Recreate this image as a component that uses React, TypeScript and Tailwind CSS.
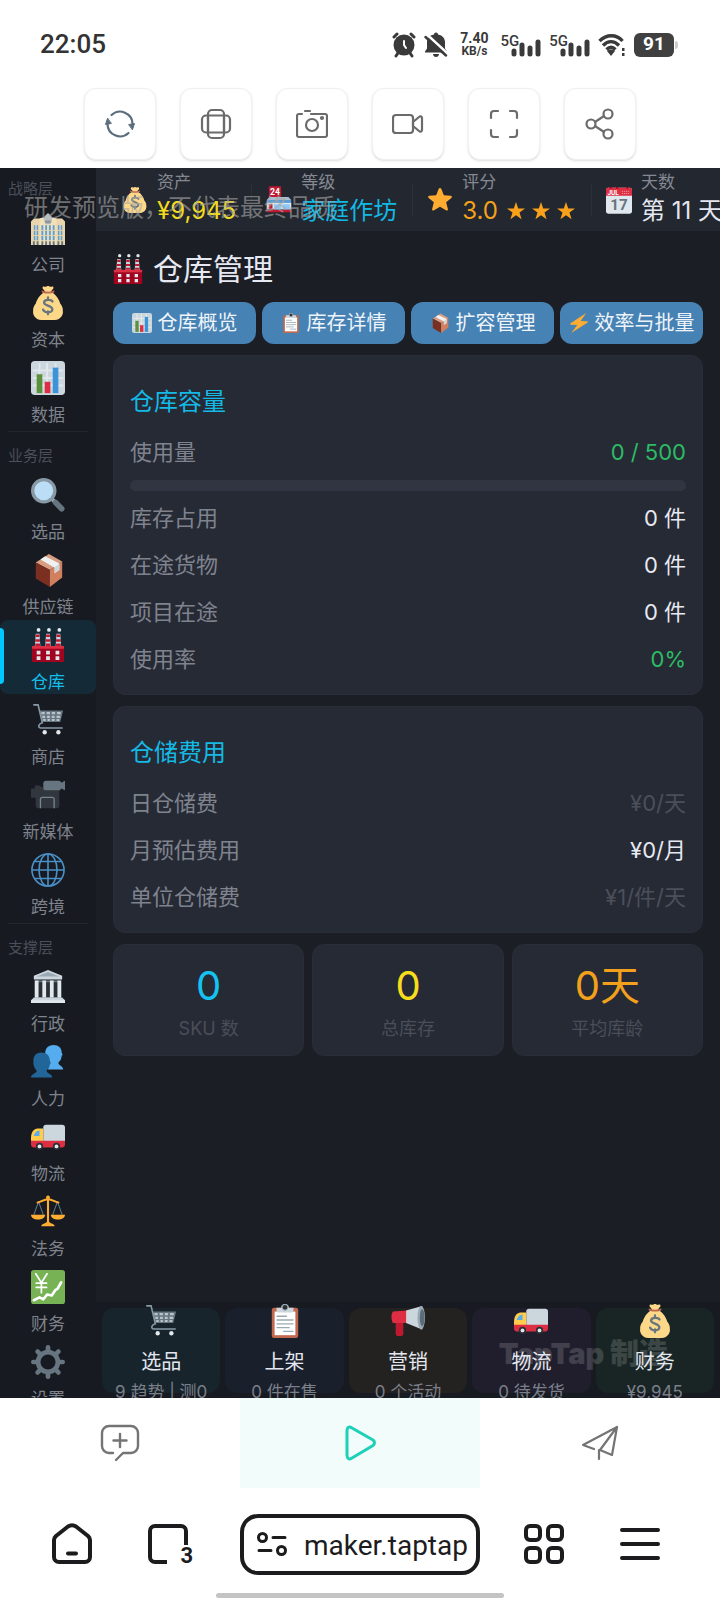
import type { ReactNode } from "react";

/* ---------- colour pictograms, all on a 36 x 36 grid ---------- */

const pictograms: Record<string, ReactNode> = {
  office: (
    <>
      <path fill="#e8d5ab" d="M0 11l3-3h8v28H0zM25 8h8l3 3v25H25z" />
      <path fill="#f1e0ba" d="M9 8l3-1h12l3 1v28H9z" />
      <path fill="#b9bec2" d="M14 6l2-2 2-2 2 2 2 2v5l-2 3h-4l-2-3z" />
      <path fill="#8f979d" d="M15 10h6v3h-6z" />
      <path fill="#5c9fd6" d="M3 15h1.600v16H3zM6 15h1.600v16H6zM11 15h2v16h-2zM15 15h2v16h-2zM19 15h2v16h-2zM23 15h2v16h-2zM28.500 15h1.600v16h-1.600zM31.500 15h1.600v16h-1.600z" />
      <path stroke="#e8d5ab" d="M0 20.500h36M0 26h36" />
      <path fill="#66757f" d="M2 32h2v4H2zM6 32h2v4H6zM11 32h2v4h-2zM15 32h2v4h-2zM19 32h2v4h-2zM23 32h2v4h-2zM28 32h2v4h-2zM32 32h2v4h-2z" />
    </>
  ),
  moneybag: (
    <>
      <path fill="#fdd888" d="M30.900 18.600C29.500 12.500 24.800 8 21 6l1.300-1.800c1-.7 2-1.700 1.200-3.300-1-1-2.200.3-3.400-.2C19.300.4 19 0 18 0s-1.300.4-2.100.7c-1.200.5-2.500-.8-3.400.2-.8 1.600.2 2.600 1.200 3.300L15 6c-3.800 2-8.500 6.500-9.900 12.600C3 21 2 24 2.300 26.400 1.500 29 4 36 11 36h14c7 0 9.500-7 8.700-9.600.3-2.400-.7-5.400-2.800-7.800z" />
      <path fill="#bf6952" d="M11.500 4.500C13 6.500 23 6.500 24.500 4.500l.3 2c-2 2-11.600 2-13.600 0z" />
      <path fill="none" stroke="#67757f" strokeWidth="2.400" strokeLinecap="round" d="M22.800 16.500c-1-2.200-8.500-3-9 .8-.4 3.800 8.800 3.200 8.800 7.400 0 4.300-8.500 4-9.800.3M18 12v2.500M18 27v3" />
    </>
  ),
  chart: (
    <>
      <rect width="36" height="36" rx="4" fill="#ccd6dd" />
      <path stroke="#e1e8ed" strokeWidth="2" d="M2 10h32M2 18h32M2 26h32M9 2v32M17 2v32M26 2v32" />
      <path fill="#5c913b" d="M6 14h6v20H6z" />
      <path fill="#dd2e44" d="M14.500 22h6v12h-6z" />
      <path fill="#3b94d9" d="M23 7h6v27h-6z" />
    </>
  ),
  magnifier: (
    <>
      <path stroke="#9aaab4" strokeWidth="4" d="M21 21l5 5" />
      <path stroke="#66757f" strokeWidth="6" strokeLinecap="round" d="M26 26l6.500 6.500" />
      <circle cx="13.500" cy="13.500" r="13.500" fill="#8899a6" />
      <circle cx="13.500" cy="13.500" r="10" fill="#bbddf5" />
    </>
  ),
  parcel: (
    <>
      <path fill="#d99e82" d="M19 1L33 9 20 18 5 10z" />
      <path fill="#7a2f20" d="M5 10l15 8v18L5 27z" />
      <path fill="#d0805f" d="M33 9v17L20 36V18z" />
      <path fill="#f0f1f2" d="M10 7l15 8.500v6l5-3.500v-7L15 3.500z" />
      <path fill="#ccd6dd" d="M25 15l5-4v7l-5 3.500z" />
    </>
  ),
  factory: (
    <>
      <path fill="#ccd6dd" d="M5 6h4l1 14H4zM16 6h4l1 14h-6zM27 6h4l1 14h-6z" />
      <path fill="#be1931" d="M5 7h4v2.500H5zM4.500 12h5v2.500h-5zM4.500 16.500h5V19h-5zM16 7h4v2.500h-4zM15.500 12h5v2.500h-5zM15.500 16.500h5V19h-5zM27 7h4v2.500h-4zM26.500 12h5v2.500h-5zM26.500 16.500h5V19h-5z" />
      <circle cx="8" cy="2" r="2" fill="#e1e8ed" />
      <circle cx="19" cy="2" r="2" fill="#e1e8ed" />
      <circle cx="30" cy="2" r="2" fill="#e1e8ed" />
      <path fill="#a0041e" d="M1 20h34v16H1z" />
      <path fill="#dd2e44" d="M1 19h34v3H1z" />
      <path fill="#e1e8ed" d="M6 24h4v4H6zM16 24h4v4h-4zM26 24h4v4h-4zM6 30h4v4H6zM16 30h4v4h-4zM26 30h4v4h-4z" />
    </>
  ),
  cart: (
    <>
      <path fill="#66757f" d="M9 8h25l-3 12H12z" />
      <path fill="#b8c4cc" d="M11 9.500h3.500V12H11zM16.500 9.500H20V12h-3.500zM22 9.500h3.500V12H22zM27.500 9.500h4V12h-4zM12 13.500h3V16h-3zM17 13.500h3V16h-3zM22 13.500h3V16h-3zM27 13.500h4V16h-4zM13 17h2.500v2H13zM17.500 17H20v2h-2.500zM22 17h3v2h-3zM27 17h3v2h-3z" />
      <path fill="none" stroke="#8899a6" strokeWidth="1.700" strokeLinecap="round" d="M3 2h4.500l4.500 19c-4 1-5 5-2 5.500h23" />
      <circle cx="14.500" cy="31" r="2.300" fill="#e1e8ed" />
      <circle cx="29" cy="31" r="2.300" fill="#e1e8ed" />
    </>
  ),
  camera: (
    <>
      <path fill="#31373d" d="M0 11h4V8h5l3 2h18v19a3 3 0 01-3 3H8a3 3 0 01-3-3v-8H0z" />
      <path fill="none" stroke="#77858f" strokeWidth="1.400" d="M10 32V22.500c0-1.500 1-2 2-2h11c1 0 1.500.5 1.500 2V32" />
      <rect x="13" y="3" width="19" height="10" rx="3" fill="#66757f" />
      <path fill="#66757f" d="M30 6l6-3v10l-6-3z" />
    </>
  ),
  globe: (
    <g fill="none" stroke="#4a90c8" strokeWidth="1.700">
      <circle cx="18" cy="18" r="17" />
      <ellipse cx="18" cy="18" rx="9.500" ry="17" />
      <path d="M18 1v34M1 18h34M4 9h28M4 27h28" />
    </g>
  ),
  institution: (
    <>
      <path fill="#66757f" d="M4 11h28v19H4z" />
      <path fill="#292f33" d="M7 13h22v16H7z" />
      <path fill="#ccd6dd" d="M18 0l15 6v4H3V6zM3 29h30l3 3v3H0v-3z" />
      <path fill="#99aab5" d="M18 2l12 5H6z" />
      <path fill="#e1e8ed" d="M4 11h4v18H4zM12 11h4v18h-4zM20 11h4v18h-4zM28 11h4v18h-4zM0 32h36v3H0z" />
    </>
  ),
  people: (
    <>
      <path fill="#55acee" d="M15 9c0-6 4-9 9-9s8.500 3 8.500 8l1 2.500-1 1c-.3 4-1.700 5.500-3.500 7 0 4 5 3 5 7.500H18z" />
      <path fill="#226699" d="M2.500 17C2.500 11 6 8 11 8s9 3 9 9l1 2-1 1.500c-.5 4-1.500 5-3.500 6.500 0 4 6 3 6 7.500H0C0 30 6 31 6 27c-2.500-2-3.500-5-3.500-10z" />
    </>
  ),
  truck: (
    <>
      <rect x="13" y="5" width="23" height="20" rx="3" fill="#ccd6dd" />
      <path fill="#ffcc4d" d="M0 24v-5c0-6 3-10 7-10h6v15z" />
      <path fill="#55acee" d="M3 17c.5-3 3-6 6-6v6z" />
      <path fill="#dd2e44" d="M0 22h36v4c0 2-1 3-3 3H3c-2 0-3-1-3-3z" />
      <circle cx="9" cy="28" r="3.800" fill="#292f33" />
      <circle cx="27" cy="28" r="3.800" fill="#292f33" />
      <circle cx="9" cy="28" r="2" fill="#e1e8ed" />
      <circle cx="27" cy="28" r="2" fill="#e1e8ed" />
    </>
  ),
  scales: (
    <>
      <path fill="none" stroke="#66859c" strokeWidth="1" d="M8 7L3 21M8 7l5 14M28 7l-5 14M28 7l5 14" />
      <path fill="none" stroke="#ffac33" strokeWidth="2.200" strokeLinecap="round" d="M7 8c3-.500 7-3.500 11-3.500S26 7.500 29 8M18 2v28" />
      <path fill="#ffac33" d="M0 21h15c0 3-3 5-7.500 5S0 24 0 21zM21 21h15c0 3-3 5-7.500 5S21 24 21 21zM11 33c0-3 4-2 6-5h2c2 3 6 2 6 5z" />
      <circle cx="18" cy="2.500" r="2" fill="#ffac33" />
    </>
  ),
  yenChart: (
    <>
      <rect width="36" height="36" rx="3" fill="#77b255" />
      <path fill="none" stroke="#fff" strokeWidth="1.800" strokeLinecap="round" d="M5 4l6 9.500L17 4M11 13.500V24M5.500 14h11M5.500 18.500h11" />
      <path fill="none" stroke="#fff" strokeWidth="2.800" strokeLinecap="round" strokeLinejoin="round" d="M3 32l6-3 4 2 4-5 5 1 4-6 2-1 4-7" />
    </>
  ),
  gear: (
    <>
      <circle cx="18" cy="18" r="10.500" fill="none" stroke="#66757f" strokeWidth="5" />
      <path stroke="#66757f" strokeWidth="5" strokeLinecap="round" d="M18 2.500V7M18 29v4.500M2.500 18H7M29 18h4.500M7 7l3 3M26 26l3 3M29 7l-3 3M7 29l3-3" />
    </>
  ),
  clipboard: (
    <>
      <rect x="4" y="4" width="28" height="32" rx="2.500" fill="#c1694f" />
      <path fill="#fff" d="M7 8h22v25H7z" />
      <path stroke="#99aab5" strokeWidth="1.500" d="M9 13h11M9 17h18M9 21h18M9 25h14M16 29h11" />
      <path fill="#ccd6dd" d="M9 4h5a4 4 0 018 0h5v3c0 1-1 2-2 2H11c-1 0-2-1-2-2z" />
      <circle cx="18" cy="3.500" r="3" fill="#292f33" stroke="#99aab5" />
    </>
  ),
  bolt: (
    <path fill="#ffac33" d="M31 0L3 18.500c-1.500 1-1 2.500.5 2.500L15 21.500 4 36l29-18.500c1.500-1 1-2.500-.5-2.500L21 14.500z" />
  ),
  star: (
    <path fill="#ffac33" d="M18 1.500c.8 0 1.500.5 1.900 1.400l3.400 8.600 9.400.6c1.700.1 2.300 2 1 3.100l-7.200 6 2.400 9.100c.4 1.600-1.200 2.800-2.600 1.900L18 27.200l-8.300 5c-1.400.9-3-.3-2.600-1.900l2.400-9.100-7.200-6c-1.300-1.100-.7-3 1-3.100l9.400-.6 3.400-8.600c.4-.9 1.100-1.400 1.900-1.400z" />
  ),
  calendar: (
    <>
      <rect width="36" height="36" y="1" rx="3" fill="#e1e8ed" />
      <path fill="#dd2e44" d="M0 12V4c0-2 1-3 3-3h30c2 0 3 1 3 3v8z" />
      <path fill="#a0041e" d="M5 0h3v2H5zM14 0h3v2h-3zM28 0h3v2h-3z" />
      <text x="2" y="10.500" fontSize="9" fontWeight="700" fill="#fff" fontFamily="Roboto">JUL</text>
      <path stroke="#f4abb4" strokeWidth="1.200" strokeDasharray="1.500 1.200" d="M22 6h11M22 9h11" />
      <text x="18" y="31.500" fontSize="21" fontWeight="700" textAnchor="middle" fill="#66757f" fontFamily="Roboto">17</text>
    </>
  ),
  store: (
    <>
      <path fill="#be1931" d="M4-1h17v15H4z" />
      <text x="12.500" y="10.500" fontSize="12" fontWeight="700" textAnchor="middle" fill="#fff" fontFamily="Roboto">24</text>
      <path fill="#a9bdd0" d="M1 18l4-4h26l4 4z" />
      <path fill="#5c9bd1" d="M1 18h34v5H1z" />
      <path fill="#e1e8ed" d="M1 22h34v9H1z" />
      <path fill="#be1931" d="M1 31h34v4H1zM4 24h5v6H4z" />
      <path fill="#88c9f9" d="M11 24h10v7H11zM23 24h10v7H23z" />
    </>
  ),
  megaphone: (
    <>
      <path fill="#be1931" d="M5 15h8v16c0 2-1 3-2.500 3h-3C6 34 5 33 5 31z" />
      <path fill="#dd2e44" d="M2 8l15-1v13H2c-2-3-2-9 0-12z" />
      <path fill="#ccd6dd" d="M16 7L33 2v25L16 20z" />
      <ellipse cx="32" cy="14.500" rx="4" ry="12.500" fill="#99aab5" />
      <ellipse cx="33" cy="14.500" rx="2.500" ry="9" fill="#5b6c78" />
    </>
  ),
};

function Pic({ name, className }: { name: string; className: string }) {
  return (
    <svg viewBox="0 0 36 36" overflow="visible" aria-hidden="true" className={`shrink-0 ${className}`}>
      {pictograms[name]}
    </svg>
  );
}

function Line({ children, className }: { children: ReactNode; className: string }) {
  return (
    <svg viewBox="0 0 32 32" fill="none" stroke="currentColor" strokeWidth="2.200" strokeLinecap="round" strokeLinejoin="round" aria-hidden="true" className={className}>
      {children}
    </svg>
  );
}

/* ---------- phone status bar ---------- */

function Signal() {
  return (
    <div className="flex items-start">
      <span className="text-[15px] leading-4 font-medium">5G</span>
      <svg viewBox="0 0 30 24" aria-hidden="true" className="-ml-2 h-6 w-[30px]">
        <path stroke="currentColor" strokeWidth="5" strokeLinecap="round" d="M3 18v3M11 12v9M19 15v6M27 9v12" />
      </svg>
    </div>
  );
}

function StatusBar() {
  return (
    <div className="flex h-[88px] shrink-0 items-center justify-between pt-px pr-[42px] pl-10 font-[Roboto,sans-serif] text-[#3a3a3a]">
      <time className="text-[26px] font-medium text-[#333]">22:05</time>
      <div className="flex items-center gap-2">
        <svg viewBox="0 0 24 26" aria-hidden="true" className="h-[26px] w-6">
          <circle cx="12" cy="13" r="10.500" fill="currentColor" />
          <path stroke="currentColor" strokeWidth="3" strokeLinecap="round" d="M2 5l3-3M22 5l-3-3M6 21l-2 3M18 21l2 3" />
          <path fill="none" stroke="#fff" strokeWidth="2" strokeLinecap="round" d="M12 9v4l2 3" />
        </svg>
        <svg viewBox="0 0 24 26" aria-hidden="true" className="h-[26px] w-6">
          <path fill="currentColor" d="M10 2.500a2 2 0 014 0c5 1 7 4 7 8v6l2 3v1H1v-1l2-3v-6c0-4 2-7 7-8zM9 22h6c0 4-6 4-6 0z" />
          <path stroke="#fff" strokeWidth="2.400" d="M3 2.500l20 18.500" />
          <path stroke="currentColor" strokeWidth="2.400" strokeLinecap="round" d="M1.500 5L22 23.500" />
        </svg>
        <div className="ml-1 text-center text-[12px] leading-[13px] font-bold">
          <div className="text-[14px]">7.40</div>
          <div>KB/s</div>
        </div>
        <div className="ml-1"><Signal /></div>
        <Signal />
        <svg viewBox="0 0 28 24" fill="none" stroke="currentColor" strokeWidth="3.400" aria-hidden="true" className="h-6 w-7">
          <path d="M1.500 8c7-7 17-7 23 0M5 12.500c5-5 11-5 16 0" />
          <path d="M8.500 16.500c3-3 6-3 9 0" />
          <path fill="currentColor" stroke="none" d="M9 18c2-2 6-2 8 0l-4 5zM24 15h2.500v3H24zM24 20h2.500v3H24z" />
        </svg>
        <div className="flex items-center gap-px">
          <div className="flex h-6 w-10 items-center justify-center rounded-md bg-[#404040] text-[19px] font-bold text-white">91</div>
          <div className="h-2 w-[3px] rounded-r bg-[#ccc]" />
        </div>
      </div>
    </div>
  );
}

/* ---------- preview toolbar ---------- */

const tools = [
  {
    label: "刷新",
    art: (
      <g stroke="#5b6d7d">
        <path d="M7.500 7A12.500 12.500 0 0128.500 16M24.500 25A12.500 12.500 0 013.500 16" />
        <path fill="#5b6d7d" d="M25 16.500l5.500-1-2 6zM7 15.500l-5.500 1 2-6z" strokeWidth="1" />
      </g>
    ),
  },
  {
    label: "旋转屏幕",
    art: (
      <>
        <rect x="8" y="2" width="16" height="28" rx="4" />
        <rect x="2" y="7.500" width="28" height="17" rx="4" />
        <path d="M8 8v16M24 8v16" />
      </>
    ),
  },
  {
    label: "截图",
    art: (
      <>
        <path d="M6 6H3a2 2 0 00-2 2v19a2 2 0 002 2h26a2 2 0 002-2V8a2 2 0 00-2-2H15M9 3h5" />
        <circle cx="16" cy="17" r="6" />
        <circle cx="26" cy="10" r="1" fill="currentColor" />
      </>
    ),
  },
  {
    label: "录屏",
    art: (
      <>
        <rect x="1" y="7" width="20" height="18" rx="3" />
        <path d="M21 14l6-5c1-1 3-1 3 1v12c0 2-2 2-3 1l-6-5z" />
      </>
    ),
  },
  { label: "全屏", art: <path d="M3 10V6a3 3 0 013-3h4M22 3h4a3 3 0 013 3v4M29 22v4a3 3 0 01-3 3h-4M10 29H6a3 3 0 01-3-3v-4" /> },
  {
    label: "分享",
    art: (
      <>
        <circle cx="7" cy="16" r="4.500" />
        <circle cx="24" cy="6" r="4.500" />
        <circle cx="24" cy="26" r="4.500" />
        <path d="M11 14l9-6M11 18l9 6" />
      </>
    ),
  },
];

function Toolbar() {
  return (
    <div className="flex h-20 shrink-0 items-start justify-center gap-6">
      {tools.map((t) => (
        <button key={t.label} aria-label={t.label} className="flex h-[72px] w-[72px] items-center justify-center rounded-xl border border-[#f0f0f0] bg-white text-[#6b6b6b] shadow-sm">
          <Line className="h-8 w-8">{t.art}</Line>
        </button>
      ))}
    </div>
  );
}

/* ---------- game: sidebar ---------- */

const sections = [
  { title: "战略层", items: [["office", "公司"], ["moneybag", "资本"], ["chart", "数据"]] },
  { title: "业务层", items: [["magnifier", "选品"], ["parcel", "供应链"], ["factory", "仓库"], ["cart", "商店"], ["camera", "新媒体"], ["globe", "跨境"]] },
  { title: "支撑层", items: [["institution", "行政"], ["people", "人力"], ["truck", "物流"], ["scales", "法务"], ["yenChart", "财务"], ["gear", "设置"]] },
];

function Sidebar() {
  return (
    <nav className="flex w-24 shrink-0 flex-col overflow-hidden bg-[#171a20] pt-[9px]">
      {sections.map((s, i) => (
        <section key={s.title} className="shrink-0">
          {i > 0 && <hr className="mx-2 mt-[3px] mb-3 border-[#22262d]" />}
          <h2 className="mb-[2px] pl-2 text-[15px] leading-6 text-[#4a4f59]">{s.title}</h2>
          {s.items.map(([icon, label]) => {
            const active = label === "仓库";
            return (
              <button
                key={label}
                aria-current={active ? "page" : undefined}
                className={`relative mb-px flex h-[74px] w-full flex-col items-center gap-[9px] rounded-lg pt-2 text-[17px] leading-[22px] ${active ? "bg-[#142b37] text-[#14bfec]" : "text-[#7f838d]"}`}
              >
                {active && <span className="absolute top-2 left-0 h-14 w-1 rounded-r bg-[#00c8ff]" />}
                <Pic name={icon} className="h-[34px] w-[34px]" />
                {label}
              </button>
            );
          })}
        </section>
      ))}
    </nav>
  );
}

/* ---------- game: header ---------- */

const stats = [
  { icon: "moneybag", label: "资产", value: "¥9,945", tone: "text-[#f2dc1c]" },
  { icon: "store", label: "等级", value: "家庭作坊", tone: "text-[#12b9e4]" },
  { icon: "star", label: "评分", value: "3.0", tone: "text-[#f5a21b]" },
  { icon: "calendar", label: "天数", value: "第 11 天", tone: "text-[#e4e7f0]" },
];

function Header() {
  return (
    <header className="flex h-[63px] shrink-0 items-center gap-[15px] overflow-hidden bg-[#23272f] pl-[26px] whitespace-nowrap">
      {stats.map((s, i) => (
        <div key={s.label} className="flex shrink-0 items-center gap-[14px]">
          {i > 0 && <span className="h-8 w-px bg-[#2b2f37]" />}
          <div className="flex items-center gap-[9px]">
            <Pic name={s.icon} className="h-[26px] w-[26px]" />
            <div className="pb-[3px]">
              <div className="text-[17px] leading-5 text-[#858993]">{s.label}</div>
              <div className={`mt-[5px] flex items-center gap-2 text-[24px] leading-7 ${s.tone}`}>
                {s.value}
                {s.icon === "star" && (
                  <span className="flex gap-[5px]">
                    {[0, 1, 2].map((n) => (
                      <svg key={n} viewBox="0 0 20 20" className="h-5 w-5" fill="#f9a11b" aria-hidden="true">
                        <path d="M10 1l2.200 6.600H19l-5.500 4 2.100 6.700L10 14.200l-5.600 4.100 2.100-6.700-5.500-4h6.800z" />
                      </svg>
                    ))}
                  </span>
                )}
              </div>
            </div>
          </div>
        </div>
      ))}
    </header>
  );
}

/* ---------- game: warehouse page ---------- */

const tabs = [["chart", "仓库概览"], ["clipboard", "库存详情"], ["parcel", "扩容管理"], ["bolt", "效率与批量"]];

function Row({ label, value, tone = "text-[#e6e9f2]" }: { label: string; value: string; tone?: string }) {
  return (
    <div className="flex h-[47px] items-center justify-between text-[22px]">
      <dt className="text-[#7f838e]">{label}</dt>
      <dd className={tone}>{value}</dd>
    </div>
  );
}

function Card({ title, children }: { title: string; children: ReactNode }) {
  return (
    <section className="mb-[11px] rounded-xl border border-[#292d38] bg-[#262a35] px-4 pt-7 pb-[11px]">
      <h2 className="mb-[9px] text-[24px] leading-9 text-[#14b9e6]">{title}</h2>
      <dl>{children}</dl>
    </section>
  );
}

const totals = [
  { value: "0", label: "SKU 数", tone: "text-[#14c3f2]" },
  { value: "0", label: "总库存", tone: "text-[#f7dd1c]" },
  { value: "0天", label: "平均库龄", tone: "text-[#f3a01c]" },
];

function Warehouse() {
  return (
    <main className="min-h-0 flex-1 overflow-hidden px-[17px]">
      <h1 className="flex h-[71px] items-center gap-[10px] pt-[5px] text-[30px] text-[#e6e9f2]">
        <Pic name="factory" className="h-[30px] w-[30px]" />
        仓库管理
      </h1>
      <div role="tablist" className="mb-[11px] grid grid-cols-4 gap-[6px]">
        {tabs.map(([icon, label]) => (
          <button key={label} role="tab" className="flex h-[42px] items-center justify-center gap-[6px] rounded-xl bg-[#4682b4] text-[20px] whitespace-nowrap text-[#eef4fa]">
            <Pic name={icon} className="h-5 w-5" />
            {label}
          </button>
        ))}
      </div>
      <Card title="仓库容量">
        <Row label="使用量" value="0 / 500" tone="text-[#2bbd63]" />
        <div role="progressbar" aria-label="使用量" aria-valuenow={0} aria-valuemax={500} className="my-1 h-[11px] rounded-full bg-[#313542]" />
        <Row label="库存占用" value="0 件" />
        <Row label="在途货物" value="0 件" />
        <Row label="项目在途" value="0 件" />
        <Row label="使用率" value="0%" tone="text-[#2bbd63]" />
      </Card>
      <Card title="仓储费用">
        <Row label="日仓储费" value="¥0/天" tone="text-[#4b4f5a]" />
        <Row label="月预估费用" value="¥0/月" />
        <Row label="单位仓储费" value="¥1/件/天" tone="text-[#4b4f5a]" />
      </Card>
      <div className="grid grid-cols-3 gap-2">
        {totals.map((t) => (
          <div key={t.label} className="flex h-[112px] flex-col items-center rounded-xl border border-[#292d38] bg-[#262a35] pt-[17px]">
            <strong className={`text-[40px] leading-[48px] font-normal ${t.tone}`}>{t.value}</strong>
            <span className="mt-[7px] text-[18px] leading-6 text-[#4a4e59]">{t.label}</span>
          </div>
        ))}
      </div>
    </main>
  );
}

/* ---------- game: shortcuts ---------- */

const shortcuts = [
  { icon: "cart", label: "选品", note: "9 趋势 | 测0", tone: "bg-[#17242c]" },
  { icon: "clipboard", label: "上架", note: "0 件在售", tone: "bg-[#191f2b]" },
  { icon: "megaphone", label: "营销", note: "0 个活动", tone: "bg-[#232220]" },
  { icon: "truck", label: "物流", note: "0 待发货", tone: "bg-[#201e2d]" },
  { icon: "moneybag", label: "财务", note: "¥9,945", tone: "bg-[#182524]" },
];

function Shortcuts() {
  return (
    <nav className="relative grid h-24 shrink-0 grid-cols-5 gap-[5px] overflow-hidden bg-[#171a21] px-[6px] pt-[6px]">
      <div aria-hidden="true" className="absolute right-[52px] bottom-[26px] z-10 text-[29px] leading-9 font-black text-white opacity-15">TapTap 制造</div>
      {shortcuts.map((s) => (
        <button key={s.label} className={`flex h-[85px] flex-col items-center justify-center rounded-xl pt-2 ${s.tone}`}>
          <Pic name={s.icon} className="h-[34px] w-[34px]" />
          <span className="relative z-20 mt-[10px] text-[20px] leading-7 text-[#e4e7f0]">{s.label}</span>
          <span className="mt-[2px] text-[17px] leading-7 whitespace-nowrap text-[#7b7f89]">{s.note}</span>
        </button>
      ))}
    </nav>
  );
}

/* ---------- bottom bars ---------- */

function PreviewBar() {
  return (
    <div className="grid h-[90px] shrink-0 grid-cols-3 text-[#747474]">
      <button aria-label="评论" className="flex items-center justify-center">
        <svg viewBox="0 0 40 38" fill="none" stroke="currentColor" strokeWidth="2.400" strokeLinecap="round" strokeLinejoin="round" className="h-[38px] w-10" aria-hidden="true">
          <path d="M13 29H9a7 7 0 01-7-7V9a7 7 0 017-7h22a7 7 0 017 7v13a7 7 0 01-7 7h-8l-7 7M20 10v13M13.500 16.500h13" />
        </svg>
      </button>
      <button aria-label="运行" className="flex items-center justify-center bg-[#f2fdfb] text-[#1dd0b8]">
        <svg viewBox="-1 0 32 36" fill="none" stroke="currentColor" strokeWidth="3" strokeLinejoin="round" className="h-9 w-8" aria-hidden="true">
          <path d="M2 6c0-4 2-5 5-3l21 12c2 1.500 2 4 0 5.500L7 33c-3 2-5 1-5-3z" />
        </svg>
      </button>
      <button aria-label="发布" className="flex items-center justify-center">
        <svg viewBox="0 0 38 36" fill="none" stroke="currentColor" strokeWidth="2.200" strokeLinecap="round" strokeLinejoin="round" className="h-9 w-[38px]" aria-hidden="true">
          <path d="M13 24L2 20 36 2l-5 28-12-5L36 2M18 25v9" />
        </svg>
      </button>
    </div>
  );
}

function BrowserBar() {
  return (
    <div className="shrink-0 text-[#1c1c1e]">
      <div className="grid h-[105px] grid-cols-3 items-center pt-[7px]">
        <div className="flex items-center justify-center gap-[54px]">
          <button aria-label="主页">
            <svg viewBox="0 0 42 42" fill="none" stroke="currentColor" strokeWidth="4" strokeLinecap="round" strokeLinejoin="round" className="h-[42px] w-[42px]" aria-hidden="true">
              <path d="M3 17c0-2 1-3 2-4L17 3.500c3-2 5-2 8 0L37 13c1 1 2 2 2 4v17a5 5 0 01-5 5H8a5 5 0 01-5-5zM17 30.500h8" />
            </svg>
          </button>
          <button aria-label="标签页" className="relative font-[Roboto,sans-serif]">
            <svg viewBox="0 0 42 42" fill="none" stroke="currentColor" strokeWidth="4" className="h-[42px] w-[42px]" aria-hidden="true">
              <path d="M20 39H8a5 5 0 01-5-5V8a5 5 0 015-5h26a5 5 0 015 5v14" />
            </svg>
            <span className="absolute -right-1 -bottom-px text-[22px] leading-5 font-bold">3</span>
          </button>
        </div>
        <button className="flex h-[61px] items-center gap-4 overflow-hidden rounded-[18px] border-[4px] border-[#1c1c1e] pl-3 font-[Roboto,sans-serif] text-[28px] whitespace-nowrap">
          <svg viewBox="0 0 32 26" fill="none" stroke="currentColor" strokeWidth="3" strokeLinecap="round" className="h-[26px] w-8 shrink-0" aria-hidden="true">
            <circle cx="6.500" cy="6.500" r="4" />
            <circle cx="25.500" cy="19.500" r="4" />
            <path d="M17 6.500h12M3 19.500h12" />
          </svg>
          <span className="pt-1">maker.taptap</span>
        </button>
        <div className="flex items-center justify-center gap-[54px] pr-4">
          <button aria-label="应用">
            <svg viewBox="0 0 42 42" fill="none" stroke="currentColor" strokeWidth="4" className="h-[42px] w-[42px]" aria-hidden="true">
              <rect x="3" y="3" width="14" height="14" rx="4" />
              <rect x="25" y="3" width="14" height="14" rx="4" />
              <rect x="3" y="25" width="14" height="14" rx="4" />
              <rect x="25" y="25" width="14" height="14" rx="4" />
            </svg>
          </button>
          <button aria-label="菜单">
            <svg viewBox="0 0 42 42" stroke="currentColor" strokeWidth="4" strokeLinecap="round" className="h-[42px] w-[42px]" aria-hidden="true">
              <path d="M3 7h36M3 21h36M3 35h36" />
            </svg>
          </button>
        </div>
      </div>
      <div className="mx-auto mb-[2px] h-[5px] w-2/5 rounded-full bg-[#c4c4c4]" />
    </div>
  );
}

export default function App() {
  return (
    <div className="flex h-screen flex-col bg-white font-[Inter,'Noto_Sans_CJK_SC',sans-serif]" lang="zh-CN">
      <StatusBar />
      <Toolbar />
      <div className="relative flex min-h-0 flex-1 overflow-hidden bg-[#1b1e25]">
        <Sidebar />
        <div className="flex min-w-0 flex-1 flex-col">
          <Header />
          <Warehouse />
          <Shortcuts />
        </div>
        <p className="pointer-events-none absolute top-6 left-6 text-[24px] leading-8 text-[#a8a8a8] opacity-60">研发预览版，不代表最终品质</p>
      </div>
      <PreviewBar />
      <BrowserBar />
    </div>
  );
}
